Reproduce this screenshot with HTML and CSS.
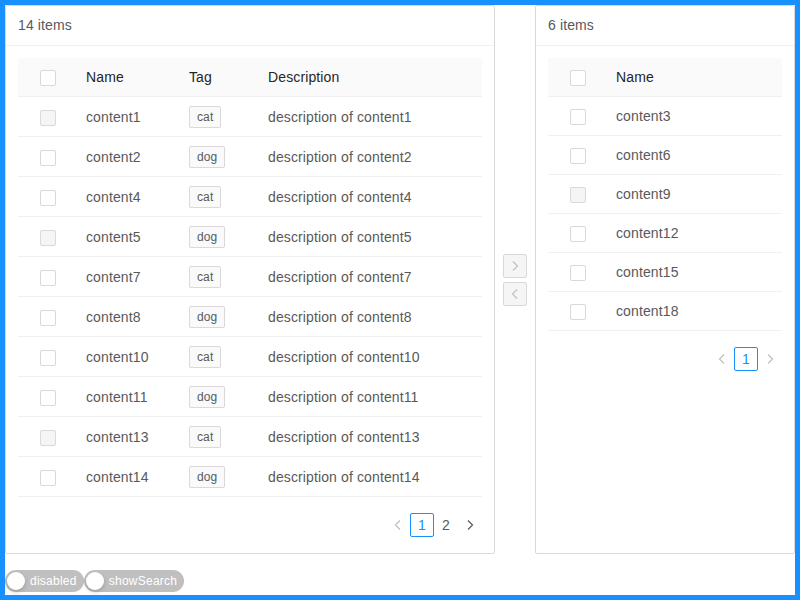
FILE: index.html
```html
<!DOCTYPE html>
<html>
<head>
<meta charset="utf-8">
<link rel="stylesheet" href="styles.css">
</head>
<body>
<div class="transfer">
  <div class="list list-left">
    <div class="list-header">14 items</div>
    <div class="list-body">
      <table class="tbl">
        <colgroup><col class="c-sel"><col class="c-name"><col class="c-tag"><col></colgroup>
        <thead><tr><th class="sel"><span class="cb"></span></th><th>Name</th><th>Tag</th><th>Description</th></tr></thead>
        <tbody>
          <tr><td class="sel"><span class="cb dis"></span></td><td>content1</td><td><span class="tag">cat</span></td><td>description of content1</td></tr>
          <tr><td class="sel"><span class="cb"></span></td><td>content2</td><td><span class="tag">dog</span></td><td>description of content2</td></tr>
          <tr><td class="sel"><span class="cb"></span></td><td>content4</td><td><span class="tag">cat</span></td><td>description of content4</td></tr>
          <tr><td class="sel"><span class="cb dis"></span></td><td>content5</td><td><span class="tag">dog</span></td><td>description of content5</td></tr>
          <tr><td class="sel"><span class="cb"></span></td><td>content7</td><td><span class="tag">cat</span></td><td>description of content7</td></tr>
          <tr><td class="sel"><span class="cb"></span></td><td>content8</td><td><span class="tag">dog</span></td><td>description of content8</td></tr>
          <tr><td class="sel"><span class="cb"></span></td><td>content10</td><td><span class="tag">cat</span></td><td>description of content10</td></tr>
          <tr><td class="sel"><span class="cb"></span></td><td>content11</td><td><span class="tag">dog</span></td><td>description of content11</td></tr>
          <tr><td class="sel"><span class="cb dis"></span></td><td>content13</td><td><span class="tag">cat</span></td><td>description of content13</td></tr>
          <tr><td class="sel"><span class="cb"></span></td><td>content14</td><td><span class="tag">dog</span></td><td>description of content14</td></tr>
        </tbody>
      </table>
      <div class="pager">
        <span class="pg-item arrow dim"><svg width="12" height="12" viewBox="0 0 12 12"><path d="M8 1.5 3.5 6 8 10.5" fill="none" stroke="currentColor" stroke-width="1.2"/></svg></span>
        <span class="pg-item active">1</span>
        <span class="pg-item">2</span>
        <span class="pg-item arrow"><svg width="12" height="12" viewBox="0 0 12 12"><path d="M4 1.5 8.5 6 4 10.5" fill="none" stroke="currentColor" stroke-width="1.2"/></svg></span>
      </div>
    </div>
  </div>
  <div class="ops">
    <span class="op-btn"><svg width="12" height="12" viewBox="0 0 12 12"><path d="M4 1.5 8.5 6 4 10.5" fill="none" stroke="currentColor" stroke-width="1.1"/></svg></span>
    <span class="op-btn"><svg width="12" height="12" viewBox="0 0 12 12"><path d="M8 1.5 3.5 6 8 10.5" fill="none" stroke="currentColor" stroke-width="1.1"/></svg></span>
  </div>
  <div class="list list-right">
    <div class="list-header">6 items</div>
    <div class="list-body">
      <table class="tbl">
        <colgroup><col class="c-sel"><col></colgroup>
        <thead><tr><th class="sel"><span class="cb"></span></th><th>Name</th></tr></thead>
        <tbody>
          <tr><td class="sel"><span class="cb"></span></td><td>content3</td></tr>
          <tr><td class="sel"><span class="cb"></span></td><td>content6</td></tr>
          <tr><td class="sel"><span class="cb dis"></span></td><td>content9</td></tr>
          <tr><td class="sel"><span class="cb"></span></td><td>content12</td></tr>
          <tr><td class="sel"><span class="cb"></span></td><td>content15</td></tr>
          <tr><td class="sel"><span class="cb"></span></td><td>content18</td></tr>
        </tbody>
      </table>
      <div class="pager">
        <span class="pg-item arrow dim"><svg width="12" height="12" viewBox="0 0 12 12"><path d="M8 1.5 3.5 6 8 10.5" fill="none" stroke="currentColor" stroke-width="1.2"/></svg></span>
        <span class="pg-item active">1</span>
        <span class="pg-item arrow dim"><svg width="12" height="12" viewBox="0 0 12 12"><path d="M4 1.5 8.5 6 4 10.5" fill="none" stroke="currentColor" stroke-width="1.2"/></svg></span>
      </div>
    </div>
  </div>
</div>
<div class="switches">
  <span class="switch"><span class="knob"></span><span class="sw-text">disabled</span></span>
  <span class="switch"><span class="knob"></span><span class="sw-text">showSearch</span></span>
</div>
</body>
</html>
```
FILE: styles.css
```css
html {
  background: #1890ff;
}
body {
  margin: 5px;
  height: 590px;
  background: #fff;
  font-family: "Liberation Sans", Arial, sans-serif;
  font-size: 14px;
  line-height: 22px;
  letter-spacing: 0.12px;
  color: #595959;
}
.transfer {
  display: flex;
  align-items: center;
  height: 549px;
}
.list {
  box-sizing: border-box;
  height: 549px;
  border: 1px solid #d9d9d9;
  border-radius: 2px;
  display: flex;
  flex-direction: column;
}
.list-left { width: 490px; }
.list-right { width: 260px; }
.list-header {
  height: 40px;
  box-sizing: border-box;
  padding: 0 12px;
  line-height: 39px;
  border-bottom: 1px solid #f0f0f0;
  color: #595959;
}
.list-body {
  padding: 12px;
}
.tbl {
  width: 100%;
  border-collapse: collapse;
  table-layout: fixed;
}
.c-sel { width: 60px; }
.c-name { width: 103px; }
.c-tag { width: 79px; }
.tbl th {
  background: #fafafa;
  color: #262626;
  font-weight: normal;
  text-align: left;
  padding: 8px;
  border-bottom: 1px solid #f0f0f0;
}
.tbl td {
  padding: 8px;
  border-bottom: 1px solid #f0f0f0;
  white-space: nowrap;
}
.tbl .sel {
  padding: 8px 0;
  text-align: center;
}
.cb {
  display: inline-block;
  width: 16px;
  height: 16px;
  box-sizing: border-box;
  border: 1px solid #d9d9d9;
  border-radius: 2px;
  background: #fff;
  vertical-align: middle;
}
.cb.dis {
  background: #f5f5f5;
}
.tag {
  display: inline-block;
  box-sizing: border-box;
  height: 22px;
  line-height: 20px;
  padding: 0 7px;
  font-size: 12px;
  background: #fafafa;
  border: 1px solid #d9d9d9;
  border-radius: 2px;
  color: #595959;
}
.pager {
  display: flex;
  justify-content: flex-end;
  margin-top: 16px;
}
.pg-item {
  box-sizing: border-box;
  width: 24px;
  height: 24px;
  display: flex;
  align-items: center;
  justify-content: center;
  color: #595959;
  border: 1px solid transparent;
  border-radius: 2px;
}
.pg-item.active {
  border-color: #1890ff;
  color: #1890ff;
}
.pg-item.arrow { color: #595959; }
.pg-item.dim { color: #bfbfbf; }
.ops {
  display: flex;
  flex-direction: column;
  gap: 4px;
  margin: 0 8px;
}
.op-btn {
  box-sizing: border-box;
  width: 24px;
  height: 24px;
  border: 1px solid #d9d9d9;
  border-radius: 2px;
  background: #f5f5f5;
  color: #bfbfbf;
  display: flex;
  align-items: center;
  justify-content: center;
}
.switches {
  display: flex;
  margin-top: 16px;
}
.switch {
  position: relative;
  box-sizing: border-box;
  height: 22px;
  border-radius: 11px;
  background: #bfbfbf;
  padding: 0 7px 0 25px;
  color: #fff;
  font-size: 12px;
  letter-spacing: 0.25px;
  line-height: 22px;
}
.knob {
  position: absolute;
  left: 2px;
  top: 2px;
  width: 18px;
  height: 18px;
  border-radius: 50%;
  background: #fff;
  box-shadow: 0 2px 4px rgba(0, 35, 11, 0.2);
}
```
